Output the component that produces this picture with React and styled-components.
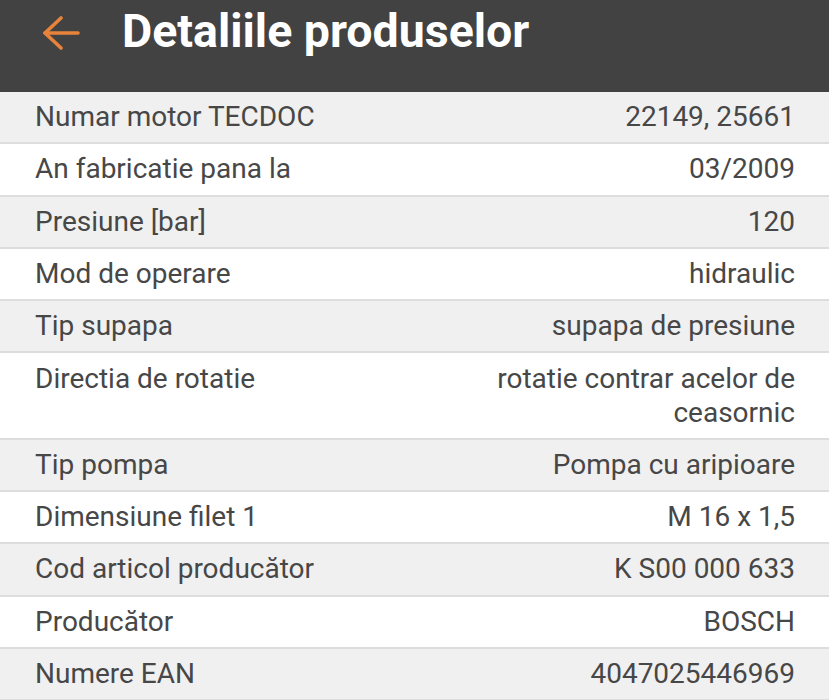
import React from 'react'
import styled, { createGlobalStyle } from 'styled-components'

const GlobalStyle = createGlobalStyle`
	body {
		margin: 0;
		background: #ffffff;
		font-family: Roboto, "Liberation Sans", sans-serif;
	}
`

const Header = styled.header`
	background-color: #424242;
	height: 92px;
	display: flex;
	align-items: flex-start;
	padding: 0 0 0 42px;
	box-sizing: border-box;
`

const BackButton = styled.button`
	background: none;
	border: 0;
	padding: 0;
	margin-top: 16px;
	width: 38px;
	height: 34px;
	display: flex;
	align-items: center;
	justify-content: center;
	cursor: pointer;
`

const Title = styled.h1`
	color: #ffffff;
	font-size: 46.5px;
	font-weight: 700;
	margin: 4px 0 0 42px;
	letter-spacing: 0;
`

const Table = styled.div`
	display: flex;
	flex-direction: column;
`

const Row = styled.div`
	display: grid;
	grid-template-columns: 1fr 1fr;
	column-gap: 24px;
	padding: 8.15px 34px 8.15px 35px;
	background-color: ${p => (p.$shaded ? '#f0f0f0' : '#ffffff')};
	border-bottom: 2px solid #dddddd;
	font-size: 28px;
	line-height: 34px;
	color: #474747;
`

const Label = styled.span``

const Value = styled.span`
	text-align: right;
`

const details = [
	['Numar motor TECDOC', '22149, 25661'],
	['An fabricatie pana la', '03/2009'],
	['Presiune [bar]', '120'],
	['Mod de operare', 'hidraulic'],
	['Tip supapa', 'supapa de presiune'],
	['Directia de rotatie', 'rotatie contrar acelor de ceasornic'],
	['Tip pompa', 'Pompa cu aripioare'],
	['Dimensiune filet 1', 'M 16 x 1,5'],
	['Cod articol producător', 'K S00 000 633'],
	['Producător', 'BOSCH'],
	['Numere EAN', '4047025446969'],
]

const BackArrow = () => (
	<svg width="38" height="34" viewBox="0 0 38 34" fill="none" stroke="#e8833b" strokeWidth="3.6" strokeLinecap="round" strokeLinejoin="round">
		<path d="M3 17 H36" />
		<path d="M19 2 L3 17 L19 32" />
	</svg>
)

export default function App() {
	return (
		<>
			<GlobalStyle />
			<Header>
				<BackButton aria-label="Inapoi">
					<BackArrow />
				</BackButton>
				<Title>Detaliile produselor</Title>
			</Header>
			<Table>
				{details.map(([label, value], i) => (
					<Row key={label} $shaded={i % 2 === 0}>
						<Label>{label}</Label>
						<Value>{value}</Value>
					</Row>
				))}
			</Table>
		</>
	)
}
